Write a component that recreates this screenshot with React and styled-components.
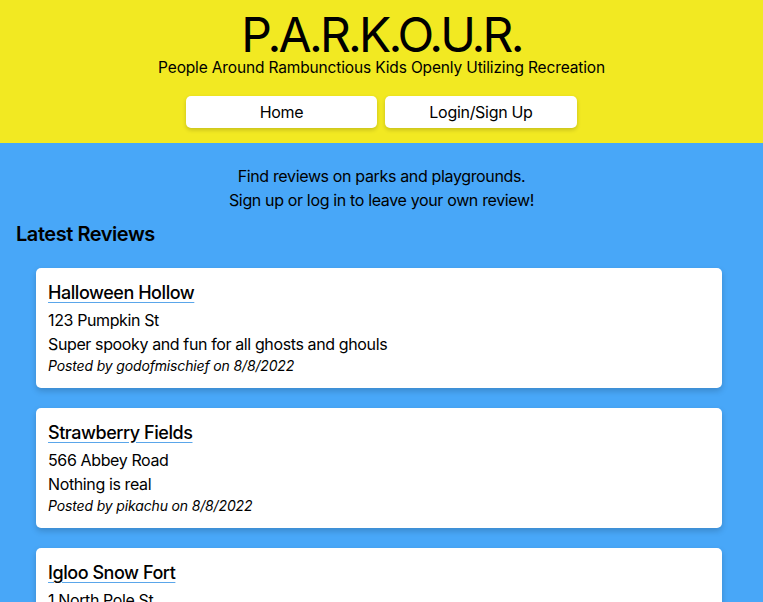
import React from 'react';
import styled, { createGlobalStyle } from 'styled-components';

const GlobalStyle = createGlobalStyle`
  html, body {
    margin: 0;
    padding: 0;
    background: #48a7f8;
    font-family: Inter, "Noto Sans", "Liberation Sans", sans-serif;
    color: #000;
  }
`;

const Header = styled.header`
  background: #f2e922;
  display: flex;
  flex-direction: column;
  align-items: center;
  padding: 10px 0 15px;
`;

const Title = styled.h1`
  margin: 0;
  font-size: 48px;
  font-weight: 400;
  line-height: 50px;
  letter-spacing: -2.8px;
`;

const Subtitle = styled.p`
  margin: 0;
  font-size: 15.5px;
  line-height: 16px;
  letter-spacing: -0.15px;
`;

const Nav = styled.nav`
  display: flex;
  gap: 8px;
  margin-top: 20px;
`;

const NavButton = styled.button`
  width: ${(p) => p.$width}px;
  height: 32px;
  background: #fff;
  border: none;
  border-radius: 5px;
  box-shadow: 0 2px 4px rgba(0, 0, 0, 0.18);
  font-family: inherit;
  font-size: 16px;
  letter-spacing: -0.3px;
  color: #000;
  cursor: pointer;
`;

const Main = styled.main`
  padding: 21px 16px 0;
`;

const Intro = styled.p`
  margin: 0;
  text-align: center;
  font-size: 16px;
  line-height: 24px;
  letter-spacing: -0.35px;
`;

const SectionTitle = styled.h2`
  margin: 8px 0 0;
  font-size: 20px;
  font-weight: 600;
  line-height: 28px;
  letter-spacing: -0.45px;
`;

const ReviewList = styled.div`
  display: flex;
  flex-direction: column;
  gap: 20px;
  padding: 20px 25px 20px 20px;
`;

const Card = styled.article`
  background: #fff;
  border-radius: 5px;
  box-shadow: 0 3px 6px rgba(0, 0, 0, 0.18);
  padding: 13px 12px 12px;
  display: flex;
  flex-direction: column;
`;

const ParkLink = styled.a`
  align-self: flex-start;
  font-size: 18px;
  line-height: 24px;
  font-weight: 500;
  letter-spacing: -0.45px;
  color: #000;
  text-decoration: underline;
  text-decoration-color: #5aa6ea;
  text-underline-offset: 3px;
  margin-bottom: 3px;
`;

const Line = styled.p`
  margin: 0;
  font-size: 16px;
  line-height: 24px;
  letter-spacing: -0.38px;
`;

const Posted = styled.p`
  margin: 0;
  font-size: 14px;
  line-height: 20px;
  font-style: italic;
  letter-spacing: -0.15px;
`;

const reviews = [
  { park: 'Halloween Hollow', address: '123 Pumpkin St', text: 'Super spooky and fun for all ghosts and ghouls', user: 'godofmischief', date: '8/8/2022' },
  { park: 'Strawberry Fields', address: '566 Abbey Road', text: 'Nothing is real', user: 'pikachu', date: '8/8/2022' },
  { park: 'Igloo Snow Fort', address: '1 North Pole St', text: 'Cool place to chill', user: 'frosty', date: '8/8/2022' },
];

export default function App() {
  return (
    <>
      <GlobalStyle />
      <Header>
        <Title>P.A.R.K.O.U.R.</Title>
        <Subtitle>People Around Rambunctious Kids Openly Utilizing Recreation</Subtitle>
        <Nav>
          <NavButton $width={191}>Home</NavButton>
          <NavButton $width={192}>Login/Sign Up</NavButton>
        </Nav>
      </Header>
      <Main>
        <Intro>
          Find reviews on parks and playgrounds.
          <br />
          Sign up or log in to leave your own review!
        </Intro>
        <SectionTitle>Latest Reviews</SectionTitle>
        <ReviewList>
          {reviews.map((r) => (
            <Card key={r.park}>
              <ParkLink href="#">{r.park}</ParkLink>
              <Line>{r.address}</Line>
              <Line>{r.text}</Line>
              <Posted>Posted by {r.user} on {r.date}</Posted>
            </Card>
          ))}
        </ReviewList>
      </Main>
    </>
  );
}
